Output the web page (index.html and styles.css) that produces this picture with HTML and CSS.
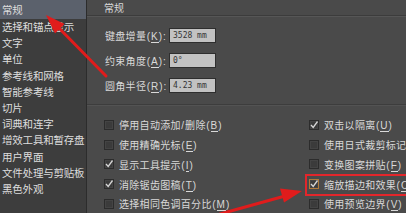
FILE: index.html
```html
<!DOCTYPE html>
<html lang="zh-CN">
<head>
<meta charset="utf-8">
<title>首选项 - 常规</title>
<link rel="stylesheet" href="styles.css">
</head>
<body>
<div class="app">
  <nav class="sidebar">
    <div class="nav-item active">常规</div>
    <div class="nav-item">选择和锚点显示</div>
    <div class="nav-item">文字</div>
    <div class="nav-item">单位</div>
    <div class="nav-item">参考线和网格</div>
    <div class="nav-item">智能参考线</div>
    <div class="nav-item">切片</div>
    <div class="nav-item">词典和连字</div>
    <div class="nav-item">增效工具和暂存盘</div>
    <div class="nav-item">用户界面</div>
    <div class="nav-item">文件处理与剪贴板</div>
    <div class="nav-item">黑色外观</div>
  </nav>
  <main class="main">
    <div class="main-header">常规</div>
    <div class="fields">
      <div class="field"><span class="label">键盘增量<span class="key">(<u>K</u>):</span></span><span class="input">3528 mm</span></div>
      <div class="field"><span class="label">约束角度<span class="key">(<u>A</u>):</span></span><span class="input">0°</span></div>
      <div class="field"><span class="label">圆角半径<span class="key">(<u>R</u>):</span></span><span class="input">4.23 mm</span></div>
    </div>
    <div class="separator"></div>
    <div class="checks">
      <div class="check"><span class="box"></span><span>停用自动添加<span class="key">/</span>删除<span class="key">(<u>B</u>)</span></span></div>
      <div class="check"><span class="box"><svg viewBox="0 0 8 8"><polyline points="1,4 3.2,6.5 7.5,0.5"/></svg></span><span>双击以隔离<span class="key">(<u>U</u>)</span></span></div>
      <div class="check"><span class="box"></span><span>使用精确光标<span class="key">(<u>E</u>)</span></span></div>
      <div class="check"><span class="box"></span><span>使用日式裁剪标记</span></div>
      <div class="check"><span class="box"><svg viewBox="0 0 8 8"><polyline points="1,4 3.2,6.5 7.5,0.5"/></svg></span><span>显示工具提示<span class="key">(<u>I</u>)</span></span></div>
      <div class="check"><span class="box"></span><span>变换图案拼贴<span class="key">(<u>F</u>)</span></span></div>
      <div class="check"><span class="box"><svg viewBox="0 0 8 8"><polyline points="1,4 3.2,6.5 7.5,0.5"/></svg></span><span>消除锯齿图稿<span class="key">(<u>T</u>)</span></span></div>
      <div class="check"><span class="box focus"><svg viewBox="0 0 8 8"><polyline points="1,4 3.2,6.5 7.5,0.5"/></svg></span><span>缩放描边和效果<span class="key">(<u>O</u>)</span></span></div>
      <div class="check"><span class="box"></span><span>选择相同色调百分比<span class="key">(<u>M</u>)</span></span></div>
      <div class="check"><span class="box"></span><span>使用预览边界<span class="key">(<u>V</u>)</span></span></div>
    </div>
  </main>
</div>
<div class="highlight"></div>
<svg class="annotations" width="406" height="213" viewBox="0 0 406 213">
  <line x1="106" y1="76" x2="56" y2="25" class="arrow-line"/>
  <polygon points="46,15 64.5,24 55,33.5" class="arrow-head"/>
  <line x1="220" y1="214" x2="285" y2="196" class="arrow-line"/>
  <polygon points="302,191 284,202.5 280,188.5" class="arrow-head"/>
</svg>
</body>
</html>
```
FILE: styles.css
```css
html, body {
  margin: 0;
  padding: 0;
}
body {
  width: 406px;
  height: 213px;
  overflow: hidden;
  position: relative;
  background: #4a4a4a;
  color: #d9d9d9;
  font-family: "Noto Sans CJK SC", sans-serif;
}
.app {
  display: flex;
  height: 213px;
}
.sidebar {
  width: 86px;
  flex: none;
  background: #3d3d3d;
  border-right: 1px solid #2c2c2c;
}
.nav-item {
  height: 16.2px;
  line-height: 16.2px;
  font-size: 10.5px;
  letter-spacing: -0.2px;
  padding-left: 2px;
  white-space: nowrap;
  color: #dedede;
}
.nav-item.active {
  height: 19px;
  line-height: 19px;
  background: #5b616c;
}
.main {
  flex: 1;
  min-width: 0;
  display: flex;
  flex-direction: column;
}
.main-header {
  height: 15px;
  line-height: 15px;
  font-size: 10px;
  padding-left: 17px;
  border-bottom: 1px solid #3c3c3c;
  box-shadow: 0 1px 0 #565656;
}
.fields {
  display: flex;
  flex-direction: column;
  gap: 10px;
  padding: 12px 0 0 18px;
}
.field {
  display: flex;
  align-items: center;
  height: 15px;
}
.label, .check {
  font-size: 10px;
  letter-spacing: 0.3px;
  white-space: nowrap;
}
.key {
  font-family: "Liberation Sans", sans-serif;
  letter-spacing: 1px;
  margin-left: 0.5px;
}
.label {
  width: 64px;
  flex: none;
}
u {
  text-decoration: none;
  border-bottom: 1px solid currentColor;
  line-height: 1;
}
.input {
  width: 42px;
  height: 13px;
  line-height: 13px;
  padding-left: 3px;
  border: 1px solid #2e2e2e;
  background: #c2c2c2;
  color: #333333;
  font-family: "DejaVu Sans Mono", monospace;
  font-size: 8px;
}
.separator {
  margin-top: 11px;
  height: 0;
  border-top: 1px solid #3d3d3d;
  border-bottom: 1px solid #535353;
}
.checks {
  margin-top: 9px;
  display: grid;
  grid-template-columns: 205px 1fr;
  grid-auto-rows: 19.75px;
  padding-left: 17px;
}
.check {
  display: flex;
  align-items: center;
  gap: 5px;
}
.box {
  width: 8px;
  height: 8px;
  flex: none;
  border: 1px solid #2c2c2c;
  background: #3b3b3b;
  box-shadow: inset 0 0 0 1px #444;
  position: relative;
}
.box svg {
  position: absolute;
  left: 0;
  top: 0;
  width: 8px;
  height: 8px;
  overflow: visible;
}
.box polyline {
  fill: none;
  stroke: #d6d6d6;
  stroke-width: 1.3;
}
.box.focus {
  border-color: #b07a3a;
}
.highlight {
  position: absolute;
  left: 305px;
  top: 174px;
  width: 110px;
  height: 18px;
  border: 2.5px solid #e3262b;
}
.annotations {
  position: absolute;
  left: 0;
  top: 0;
  pointer-events: none;
}
.arrow-line {
  stroke: #e01c1c;
  stroke-width: 3;
  stroke-linecap: round;
}
.arrow-head {
  fill: #e01c1c;
}
```
